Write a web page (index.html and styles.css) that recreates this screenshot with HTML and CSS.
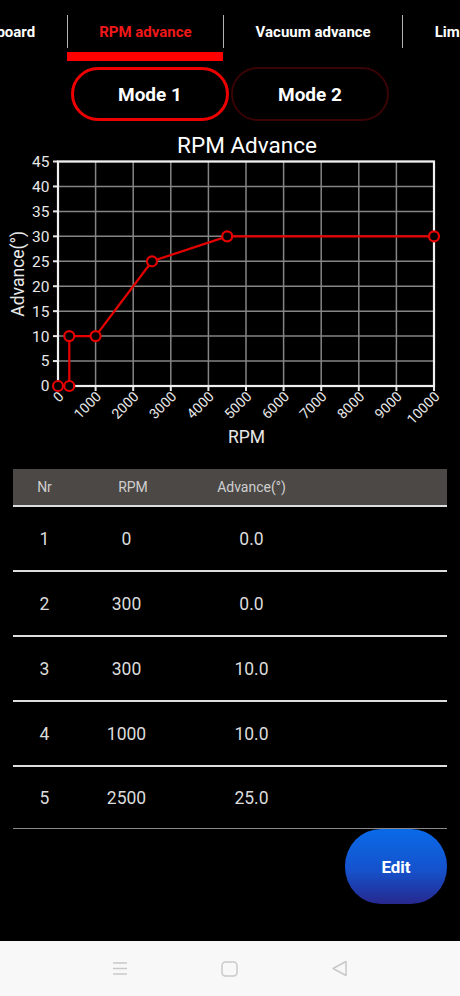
FILE: index.html
```html
<!DOCTYPE html>
<html lang="en">
<head>
    <meta charset="UTF-8">
    <meta name="viewport" content="width=device-width, initial-scale=1.0">
    <title>RPM Advance</title>
    <link rel="stylesheet" href="styles.css">
</head>
<body>
    <div class="tabs">
        <div class="tab-row">
            <div class="tab"><div class="tab-label first">Dashboard</div><div class="tab-bar"></div></div>
            <div class="tab active"><div class="tab-label">RPM advance</div><div class="tab-bar"></div></div>
            <div class="tab"><div class="tab-label">Vacuum advance</div><div class="tab-bar"></div></div>
            <div class="tab"><div class="tab-label">Limiter</div><div class="tab-bar"></div></div>
        </div>
    </div>

    <div class="modes">
        <button class="mode active">Mode 1</button>
        <button class="mode">Mode 2</button>
    </div>

    <svg id="chart" class="chart" width="460" height="330" viewBox="0 125 460 330"></svg>

    <div class="table">
        <div class="table-head">
            <span>Nr</span>
            <span class="head-rpm">RPM</span>
            <span>Advance(°)</span>
        </div>
        <div id="rows"></div>
    </div>

    <div class="actions">
        <button class="edit">Edit</button>
    </div>

    <div class="navbar">
        <svg width="16" height="15" viewBox="0 0 16 15"><path d="M1 2h14M1 7.5h14M1 13h14" stroke="#c9c9c9" stroke-width="1.5" fill="none"/></svg>
        <svg width="17" height="16" viewBox="0 0 17 16"><rect x="1" y="1" width="15" height="14" rx="3.5" stroke="#c9c9c9" stroke-width="1.5" fill="none"/></svg>
        <svg width="17" height="17" viewBox="0 0 17 17"><path d="M15 1.5 L2 8.5 L15 15.5 Z" stroke="#c9c9c9" stroke-width="1.5" stroke-linejoin="round" fill="none"/></svg>
    </div>

    <script>
        // Advance curve: [rpm, degrees]
        const points = [[0, 0], [300, 0], [300, 10], [1000, 10], [2500, 25], [4500, 30], [10000, 30]];

        const NS = "http://www.w3.org/2000/svg";
        const chart = document.getElementById("chart");

        // plot area in page pixels
        const plotLeft = 58, plotRight = 434, plotTop = 161.5, plotBottom = 386;
        const px = rpm => plotLeft + rpm / 10000 * (plotRight - plotLeft);
        const py = deg => plotBottom - deg / 45 * (plotBottom - plotTop);

        function add(tag, attrs, text) {
            const el = document.createElementNS(NS, tag);
            for (const k in attrs) el.setAttribute(k, attrs[k]);
            if (text !== undefined) el.textContent = text;
            chart.appendChild(el);
            return el;
        }

        add("text", { x: 247, y: 152.5, class: "chart-title", "text-anchor": "middle" }, "RPM Advance");

        // vertical grid + x labels
        for (let i = 0; i <= 10; i++) {
            const x = px(i * 1000);
            add("line", { x1: x, y1: plotTop, x2: x, y2: plotBottom, class: "grid" });
            add("line", { x1: x, y1: plotBottom, x2: x, y2: plotBottom + 5, class: "tick" });
            add("text", {
                class: "tick-label x-label",
                "text-anchor": "end",
                dy: "0.35em",
                transform: `translate(${x + 3}, ${plotBottom + 8}) rotate(-45)`
            }, String(i * 1000));
        }

        // horizontal grid + y labels
        for (let j = 0; j <= 9; j++) {
            const y = py(j * 5);
            add("line", { x1: plotLeft, y1: y, x2: plotRight, y2: y, class: "grid" });
            add("line", { x1: plotLeft - 5, y1: y, x2: plotLeft, y2: y, class: "tick" });
            add("text", { x: 49.5, y: y, dy: "0.35em", class: "tick-label", "text-anchor": "end" }, String(j * 5));
        }

        add("rect", { x: plotLeft, y: plotTop, width: plotRight - plotLeft, height: plotBottom - plotTop, class: "frame" });

        add("text", { x: 246.5, y: 443, class: "axis-title", "text-anchor": "middle" }, "RPM");
        add("text", {
            class: "axis-title",
            "text-anchor": "middle",
            transform: `translate(24, ${(plotTop + plotBottom) / 2}) rotate(-90)`
        }, "Advance(°)");

        add("polyline", {
            class: "curve",
            points: points.map(p => px(p[0]) + "," + py(p[1])).join(" ")
        });
        points.forEach(p => add("circle", { cx: px(p[0]), cy: py(p[1]), r: 5, class: "dot" }));

        // table rows
        const rows = document.getElementById("rows");
        points.slice(0, 5).forEach((p, i) => {
            const row = document.createElement("div");
            row.className = "row";
            row.innerHTML = `<span>${i + 1}</span><span>${p[0]}</span><span>${p[1].toFixed(1)}</span>`;
            rows.appendChild(row);
        });
    </script>
</body>
</html>
```

FILE: styles.css
```css
body {
    margin: 0;
    background-color: #000;
    color: #fff;
    font-family: Roboto, "Noto Sans", sans-serif;
    min-height: 100vh;
    display: flex;
    flex-direction: column;
}

.tabs {
    overflow: hidden;
    padding-top: 15px;
}

.tab-row {
    display: flex;
    margin-left: -69px;
}

.tab {
    flex: none;
}

.tab-label {
    height: 33px;
    padding: 0 31.5px;
    display: flex;
    align-items: center;
    font-size: 15px;
    font-weight: 700;
    white-space: nowrap;
    border-left: 1.5px solid #b4b4b4;
}

.tab-label.first {
    border-left: none;
}

.tab-bar {
    height: 9px;
    margin-top: 4px;
}

.tab.active .tab-label {
    color: #f01818;
}

.tab.active .tab-bar {
    background-color: #ff0000;
}

.modes {
    display: flex;
    justify-content: center;
    gap: 2px;
    margin-top: 6px;
}

.mode {
    width: 158px;
    height: 54px;
    box-sizing: border-box;
    border-radius: 27px;
    border: 2px solid #3a0404;
    background: transparent;
    color: #fff;
    font-family: Roboto, sans-serif;
    font-size: 19px;
    font-weight: 700;
}

.mode.active {
    border: 3px solid #ee0000;
}

.chart {
    display: block;
    margin-top: 4px;
    font-family: Roboto, sans-serif;
}

.chart-title {
    fill: #fff;
    font-size: 22.5px;
}

.grid {
    stroke: #858585;
    stroke-width: 1.5;
}

.tick {
    stroke: #e8e8e8;
    stroke-width: 2;
}

.frame {
    fill: none;
    stroke: #f0f0f0;
    stroke-width: 2.2;
}

.tick-label {
    fill: #e8e8e8;
    font-size: 15.5px;
}

.x-label {
    font-size: 14px;
}

.axis-title {
    fill: #e8e8e8;
    font-size: 17.5px;
}

.curve {
    fill: none;
    stroke: #e60000;
    stroke-width: 2.2;
}

.dot {
    fill: #000;
    stroke: #e60000;
    stroke-width: 2.2;
}

.table {
    margin: 14px 13px 0;
}

.table-head,
.row {
    display: grid;
    grid-template-columns: 63px 101px 149px 1fr;
    align-items: center;
    justify-items: center;
}

.table-head {
    height: 36px;
    background-color: #4b4846;
    color: #cfcfcf;
    font-size: 14px;
}

.head-rpm {
    padding-left: 13px;
}

.row {
    height: 63px;
    border-top: 2px solid #dedede;
    color: #dcdcdc;
    font-size: 17.5px;
}

.row:last-child {
    height: 61px;
    border-bottom: 1.5px solid #8a8a8a;
}

.actions {
    display: flex;
    justify-content: flex-end;
    padding: 0 13px;
}

.edit {
    width: 102px;
    height: 75px;
    border: none;
    border-radius: 36px / 37px;
    background: linear-gradient(#0a6ae8, #1552cc 55%, #27288e);
    color: #fff;
    font-family: Roboto, sans-serif;
    font-size: 17px;
    font-weight: 700;
}

.navbar {
    margin-top: auto;
    height: 55px;
    background-color: #f8f8f8;
    display: flex;
    justify-content: center;
    align-items: center;
    gap: 93px;
}
```
